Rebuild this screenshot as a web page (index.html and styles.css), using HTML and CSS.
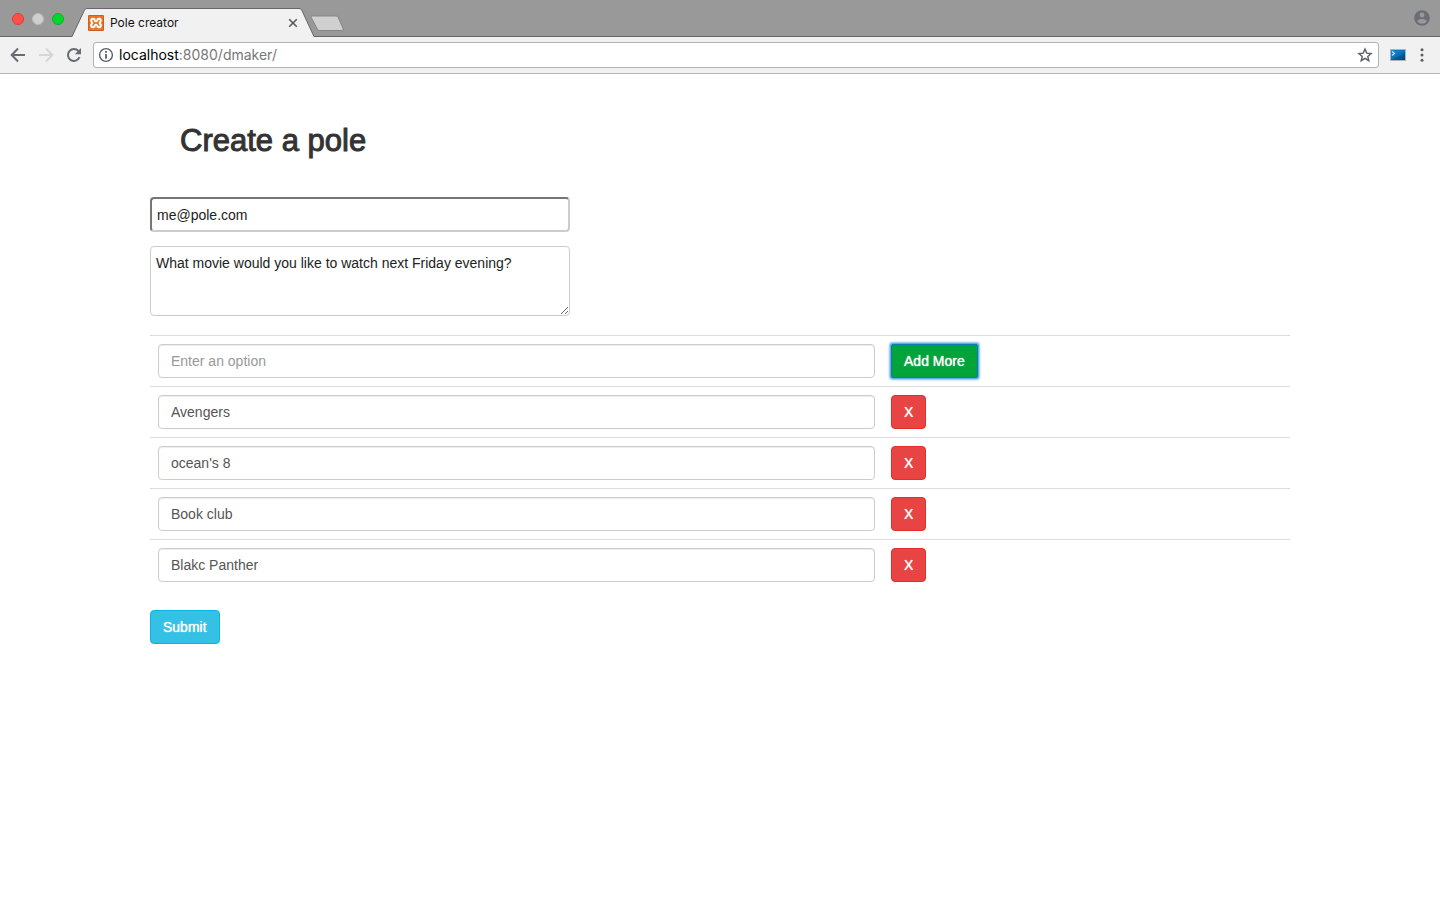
FILE: index.html
```html
<!DOCTYPE html>
<html lang="en">
<head>
<meta charset="utf-8">
<title>Pole creator</title>
<link rel="stylesheet" href="styles.css">
</head>
<body>
<header class="browser">
  <div class="tabstrip">
    <div class="lights">
      <span class="light close"></span><span class="light minimise"></span><span class="light expand"></span>
    </div>
    <div class="tab">
      <svg class="tab-shape" viewBox="0 0 242 29" aria-hidden="true"><path d="M0 29 12.500 2Q13.200.500 15 .500H227Q229 .500 229.700 2L242 29Z" fill="#f1f1f1"/><path d="M0 28.500 12.500 2Q13.200.500 15 .500H227Q229 .500 229.700 2L242 28.500" fill="none" stroke="#676767"/></svg>
      <svg class="favicon" viewBox="0 0 16 16" aria-hidden="true"><rect width="16" height="16" rx="1" fill="#c9601f"/><rect x="1" y="1" width="14" height="14" fill="#ec7627"/><path d="M6.800 5.200C6.600 3.500 4.200 3.200 3.400 4.500C2.800 5.500 3.200 6.700 4.300 8C3.200 9.300 2.800 10.500 3.400 11.500C4.200 12.800 6.600 12.500 6.800 10.800M9.200 5.200C9.400 3.500 11.800 3.200 12.600 4.500C13.200 5.500 12.800 6.700 11.700 8C12.800 9.300 13.200 10.500 12.600 11.500C11.800 12.800 9.400 12.500 9.200 10.800M6.800 5.200C6.600 6.500 9.400 6.500 9.200 5.200M6.800 10.800C6.600 9.500 9.400 9.500 9.200 10.800" fill="none" stroke="#fff" stroke-width="2" stroke-linejoin="round"/></svg>
      <span class="tab-title">Pole creator</span>
      <button class="icon-button" aria-label="Close tab"><svg width="10" height="10" viewBox="0 0 10 10"><path d="M1.200 1.200 8.800 8.800M8.800 1.200 1.200 8.800" stroke="#5a5a5a" stroke-width="1.600"/></svg></button>
    </div>
    <button class="icon-button new-tab" aria-label="New tab"><svg width="34" height="17" viewBox="0 0 34 17"><path d="M2.500 1H26Q27.500 1 28.200 2.400L33.300 14Q33.800 15.500 32 15.500H9.500Q8 15.500 7.300 14L1.200 2.400Q.800 1 2.500 1Z" fill="#d0d0d0" stroke="#858585"/></svg></button>
    <button class="icon-button profile" aria-label="Profile"><svg width="16" height="16" viewBox="0 0 16 16"><circle cx="8" cy="8" r="7.800" fill="#6c6e76"/><circle cx="8" cy="5" r="2.400" fill="#999"/><path d="M3.200 11.300C3.800 9.500 6.400 9 8 9S12.200 9.500 12.800 11.300Q11 13.800 8 13.800T3.200 11.300Z" fill="#999"/></svg></button>
  </div>
  <div class="toolbar">
    <button class="icon-button" aria-label="Back"><svg width="16" height="16" viewBox="0 0 16 16"><path d="M15 8H2M8 1.500 1.700 8 8 14.500" fill="none" stroke="#696b73" stroke-width="2"/></svg></button>
    <button class="icon-button" aria-label="Forward"><svg width="16" height="16" viewBox="0 0 16 16"><path d="M1 8H14M8 1.500 14.300 8 8 14.500" fill="none" stroke="#d5d6d9" stroke-width="2"/></svg></button>
    <button class="icon-button" aria-label="Reload"><svg width="16" height="16" viewBox="0 0 16 16"><path d="M13.500 10.200A6 6 0 1 1 12.500 4" fill="none" stroke="#696b73" stroke-width="2"/><path d="M15 1V7.200H8.800Z" fill="#696b73"/></svg></button>
    <div class="address">
      <svg width="16" height="16" viewBox="0 0 16 16" aria-hidden="true"><circle cx="8" cy="8" r="6.400" fill="none" stroke="#5c5e66" stroke-width="1.400"/><path d="M8 7V11.800M8 4V5.800" stroke="#5c5e66" stroke-width="1.800"/></svg>
      <span class="url">localhost<span class="path">:8080/dmaker/</span></span>
      <button class="icon-button" aria-label="Bookmark"><svg width="16" height="16" viewBox="0 0 16 16"><path d="M8 2 9.700 6.100 14.100 6.500 10.800 9.400 11.800 13.700 8 11.400 4.200 13.700 5.200 9.400 1.900 6.500 6.300 6.100Z" fill="none" stroke="#5c5e66" stroke-width="1.400"/></svg></button>
    </div>
    <button class="icon-button extension" aria-label="Extension"><svg width="16" height="12" viewBox="0 0 16 12"><defs><linearGradient id="screen" x1="0" y1="0" x2="1" y2="1"><stop offset="0" stop-color="#1689cc"/><stop offset=".5" stop-color="#0873bb"/><stop offset="1" stop-color="#003c79"/></linearGradient></defs><rect width="16" height="12" fill="#aeb1b5"/><rect x="1" y="1" width="14" height="10" fill="url(#screen)"/><path d="M1 11 15 4V11Z" fill="#004b8b" opacity=".5"/><path d="M2 2.500 4.500 4.500 2 6.500" fill="none" stroke="#bde8ff" stroke-width="1.200"/></svg></button>
    <button class="icon-button menu" aria-label="Menu"><svg width="16" height="16" viewBox="0 0 16 16"><g fill="#5c5e66"><circle cx="8" cy="2.700" r="1.500"/><circle cx="8" cy="8" r="1.500"/><circle cx="8" cy="13.300" r="1.500"/></g></svg></button>
  </div>
</header>
<main class="container">
  <h1 class="heading">Create a pole</h1>
  <form class="poll">
    <input class="email" type="email" aria-label="Email" value="me@pole.com">
    <textarea class="question" aria-label="Question">What movie would you like to watch next Friday evening?</textarea>
    <table class="options">
      <tr><td class="option-cell"><input class="option" type="text" aria-label="New option" placeholder="Enter an option"></td><td><button class="btn add" type="button">Add More</button></td></tr>
      <tr><td><input class="option" type="text" aria-label="Option 1" value="Avengers"></td><td><button class="btn remove" type="button">X</button></td></tr>
      <tr><td><input class="option" type="text" aria-label="Option 2" value="ocean's 8"></td><td><button class="btn remove" type="button">X</button></td></tr>
      <tr><td><input class="option" type="text" aria-label="Option 3" value="Book club"></td><td><button class="btn remove" type="button">X</button></td></tr>
      <tr><td><input class="option" type="text" aria-label="Option 4" value="Blakc Panther"></td><td><button class="btn remove" type="button">X</button></td></tr>
    </table>
    <button class="btn submit" type="submit">Submit</button>
  </form>
</main>
</body>
</html>
```
FILE: styles.css
```css
* { box-sizing: border-box; }

body {
  margin: 0;
  background: #fff;
  color: #333;
  font: 14px/20px "Liberation Sans", Arial, sans-serif;
}

svg { display: block; }
input, textarea, button { font: inherit; }

/* Browser chrome */
.browser { font-family: Inter, sans-serif; }

.tabstrip {
  display: flex;
  height: 37px;
  padding: 0 10px 0 12px;
  background: #999;
  border-bottom: 1px solid #676767;
}

.lights { display: flex; gap: 8px; padding-top: 13px; width: 60px; }
.light { width: 12px; height: 12px; border-radius: 50%; border: 1px solid; }
.close { background: #ff4f46; border-color: #e23c35; }
.minimise { background: #cfcfcf; border-color: #bababa; }
.expand { background: #04d62b; border-color: #0ab426; }

.tab {
  position: relative;
  display: flex;
  align-items: center;
  gap: 6px;
  width: 242px;
  height: 29px;
  margin-top: 8px;
  padding: 0 16px;
}
.tab-shape { position: absolute; inset: 0; width: 100%; height: 100%; }
.favicon { position: relative; width: 16px; height: 16px; }
.tab-title { position: relative; flex: 1; color: #111; font-size: 12px; line-height: 16px; }

.icon-button {
  position: relative;
  flex: none;
  padding: 0;
  border: 0;
  background: none;
}
.new-tab { align-self: flex-start; margin: 15px 0 0 -4px; }
.profile { align-self: center; margin-left: auto; }

.toolbar {
  display: flex;
  align-items: center;
  gap: 12px;
  height: 37px;
  padding: 0 10px;
  background: #f1f1f1;
  border-bottom: 1px solid #b5b5b5;
}
.address {
  display: flex;
  flex: 1;
  align-items: center;
  gap: 5px;
  height: 26px;
  margin: 0 -1px;
  padding: 0 5px 0 4px;
  background: #fff;
  border: 1px solid #b3b3b3;
  border-radius: 3px;
}
.url { flex: 1; color: #000; font-size: 14px; }
.path { color: #777; }
.menu { margin-left: -4px; }

/* Page */
.container { max-width: 1140px; margin: 0 auto; }

.heading {
  margin: 0;
  padding: 48px 30px 37px;
  font-size: 31px;
  font-weight: 500;
  line-height: 38px;
  -webkit-text-stroke: 1px #333;
}

.poll { display: flex; flex-direction: column; align-items: flex-start; }

.email {
  width: 420px;
  max-width: 100%;
  height: 35px;
  padding: 0 5px;
  background: #fff;
  border: 2px solid;
  border-color: #767676 #ccc #ccc #767676;
  border-radius: 4px;
  color: #222;
}
.question {
  width: 420px;
  max-width: 100%;
  height: 70px;
  margin-top: 14px;
  padding: 6px 5px;
  border: 1px solid #ccc;
  border-radius: 4px;
  color: #222;
}

.options { width: 100%; margin: 19px 0 20px; border-collapse: collapse; }
.options td { padding: 8px; border-top: 1px solid #ddd; }
.option-cell { width: 64.3%; }
.option {
  display: block;
  width: 100%;
  height: 34px;
  padding: 6px 12px;
  border: 1px solid #ccc;
  border-radius: 4px;
  box-shadow: inset 0 1px 1px rgba(0, 0, 0, .075);
  color: #555;
}
.option::placeholder { color: #999; }

.btn {
  display: block;
  height: 34px;
  padding: 0 12px;
  border: 1px solid;
  border-radius: 4px;
  color: #fff;
  text-shadow: 0 0 1px #fff;
}
.add { background: #00a43b; border-color: #087eaa; box-shadow: 0 0 1px 1px #5ea9f2, 0 0 2px 2px #8fc3fa; border-radius: 2px; }
.remove { background: #e84444; border-color: #e52b2b; }
.submit { background: #35c1e5; border-color: #0ab4df; }
```
